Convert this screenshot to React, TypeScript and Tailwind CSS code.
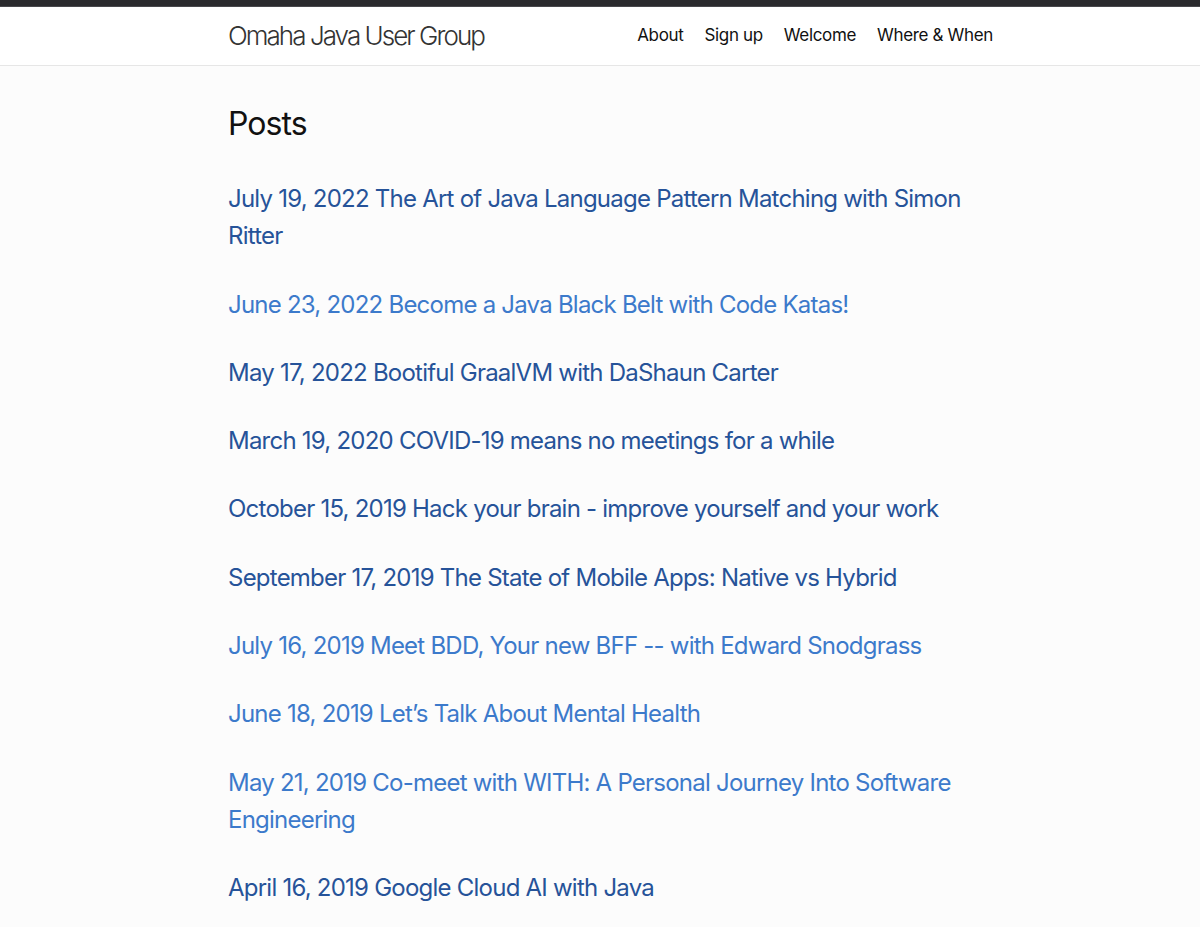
type Post = {
  date: string;
  title: string;
  visited: boolean;
};

const POSTS: Post[] = [
  { date: "July 19, 2022", title: "The Art of Java Language Pattern Matching with Simon Ritter", visited: true },
  { date: "June 23, 2022", title: "Become a Java Black Belt with Code Katas!", visited: false },
  { date: "May 17, 2022", title: "Bootiful GraalVM with DaShaun Carter", visited: true },
  { date: "March 19, 2020", title: "COVID-19 means no meetings for a while", visited: true },
  { date: "October 15, 2019", title: "Hack your brain - improve yourself and your work", visited: true },
  { date: "September 17, 2019", title: "The State of Mobile Apps: Native vs Hybrid", visited: true },
  { date: "July 16, 2019", title: "Meet BDD, Your new BFF -- with Edward Snodgrass", visited: false },
  { date: "June 18, 2019", title: "Let’s Talk About Mental Health", visited: false },
  { date: "May 21, 2019", title: "Co-meet with WITH: A Personal Journey Into Software Engineering", visited: false },
  { date: "April 16, 2019", title: "Google Cloud AI with Java", visited: true },
];

const NAV = ["About", "Sign up", "Welcome", "Where & When"];

export default function App() {
  return (
    <div className="min-h-[927px] bg-[#fcfcfc] font-['Inter','Liberation_Sans',sans-serif]">
      {/* window chrome strip */}
      <div className="h-[7px] bg-[#2a2a2d] border-b border-[#48484c]" />

      <header className="bg-white border-b border-[#e6e6e6]">
        <div className="w-[765px] ml-[228px] h-[58px] flex items-center justify-between">
          <a className="text-[26px] font-light tracking-[-0.075em] text-[#333] leading-none">
            Omaha Java User Group
          </a>
          <nav className="flex items-center gap-[21px] text-[17px] text-[#111] tracking-[-0.02em]">
            {NAV.map((n) => (
              <a key={n}>{n}</a>
            ))}
          </nav>
        </div>
      </header>

      <main className="w-[765px] ml-[228px] pt-[38px]">
        <h1 className="text-[32px] leading-[40px] font-normal tracking-[-0.03em] text-[#111] mb-[36px]">Posts</h1>
        <ul className="flex flex-col gap-[31px]">
          {POSTS.map((p) => (
            <li key={p.date}>
              <a
                className={
                  "text-[24px] leading-[37.3px] tracking-[-0.032em] " +
                  (p.visited ? "text-[#265399]" : "text-[#3c7acb]")
                }
              >
                {p.date} {p.title}
              </a>
            </li>
          ))}
        </ul>
      </main>
    </div>
  );
}
